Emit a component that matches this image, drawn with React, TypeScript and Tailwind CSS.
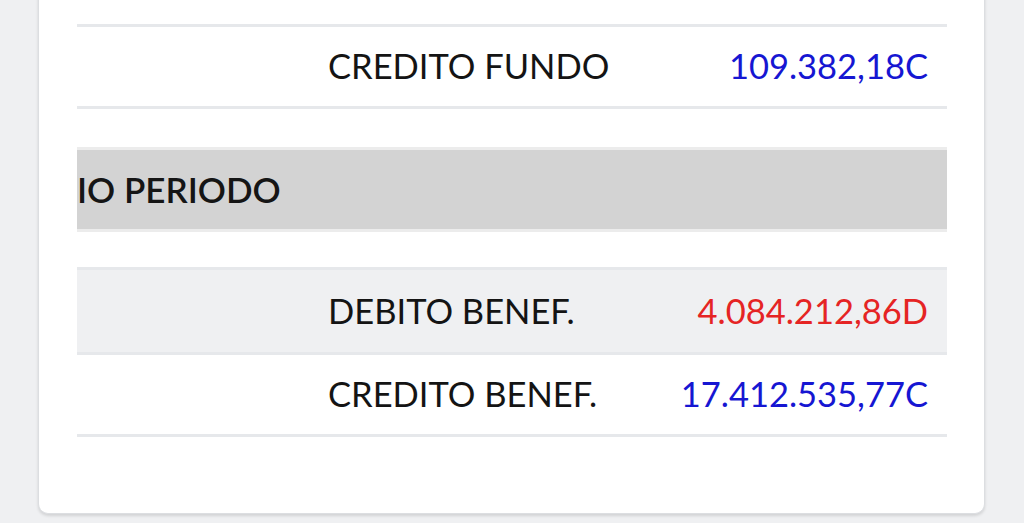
const font = { fontFamily: "Lato, 'Noto Sans', sans-serif" };

type Row = { label: string; value: string; kind: "D" | "C"; shaded?: boolean };

function AmountRow(props: Row & { className?: string }) {
  const color = props.kind === "D" ? "text-[#e52424]" : "text-[#1616d2]";
  return (
    <div
      className={`grid h-[82px] grid-cols-[251px_1fr_auto] items-center border-b-[3px] border-[#e6e8eb] pr-[19px] text-[34.5px] leading-none ${
        props.shaded ? "bg-[#eff0f2]" : "bg-white"
      } ${props.className ?? ""}`}
    >
      <div />
      <div className="text-[#141414]">{props.label}</div>
      <div className={`text-right ${color}`}>{props.value}</div>
    </div>
  );
}

export default function App() {
  return (
    <div className="h-[523px] overflow-hidden bg-[#eff0f2]" style={font}>
      <div className="ml-[38px] w-[947px] rounded-b-[10px] border-x border-b border-[#dcdee1] bg-white pb-[76px] pl-[38px] pr-[37px] shadow-[0_2px_3px_rgba(0,0,0,0.12)]">
        <div className="mt-[-55px]">
          <AmountRow label="" value="1.254.031,40D" kind="D" className="pb-[4px]" />
          <AmountRow label="CREDITO FUNDO" value="109.382,18C" kind="C" />
        </div>

        <div className="mt-[38px] border-y-[3px] border-[#ececec] bg-[#d3d3d3]">
          <div className="flex h-[79px] items-center text-[35px] font-semibold leading-none text-[#151515]">
            IO PERIODO
          </div>
        </div>

        <div className="mt-[35px] border-t-[3px] border-[#e6e8eb]">
          <AmountRow label="DEBITO BENEF." value="4.084.212,86D" kind="D" shaded className="h-[85px]" />
          <AmountRow label="CREDITO BENEF." value="17.412.535,77C" kind="C" />
        </div>
      </div>
    </div>
  );
}
